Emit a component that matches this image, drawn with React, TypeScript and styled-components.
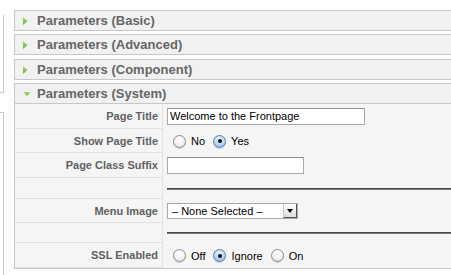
import React from 'react';
import styled, { createGlobalStyle } from 'styled-components';

const GlobalStyle = createGlobalStyle`
  html, body {
    margin: 0;
    padding: 0;
    background: #fff;
    overflow: hidden;
  }
  body {
    font-family: 'Liberation Sans', Arial, sans-serif;
  }
`;

const Page = styled.div`
  display: flex;
  align-items: stretch;
  padding-top: 10px;
  width: 100%;
  height: 275px;
  box-sizing: border-box;
  overflow: hidden;
`;

const SideColumn = styled.div`
  width: 4px;
  flex-shrink: 0;
  display: flex;
  flex-direction: column;
`;

const SideBox = styled.div<{ $top?: boolean }>`
  box-sizing: border-box;
  border-right: 1px solid #c9c9c9;
  ${p => p.$top
    ? `margin-top: 5px; height: 78px; border-bottom: 1px solid #c9c9c9;`
    : `margin-top: 19px; flex: 1; border-top: 1px solid #c9c9c9;`}
`;

const Main = styled.div`
  margin-left: 10px;
  flex: 1;
  min-width: 0;
`;

const Panel = styled.div<{ $gap: number }>`
  border: 1px solid #c8c8c8;
  border-right: none;
  margin-bottom: ${p => p.$gap}px;
  background: #f5f5f5;
`;

const PanelHeader = styled.div<{ $open?: boolean }>`
  height: 19px;
  display: flex;
  align-items: center;
  padding-left: 7px;
  background-color: #f4f4f4;
  background-image:
    linear-gradient(90deg, rgba(0, 0, 0, 0.012) 1px, transparent 1px),
    linear-gradient(rgba(0, 0, 0, 0.012) 1px, transparent 1px);
  background-size: 2px 2px;
  border-bottom: ${p => (p.$open ? '1px solid #c8c8c8' : 'none')};
  font-size: 13px;
  font-weight: bold;
  color: #666;
  cursor: pointer;
`;

const Arrow = styled.svg`
  width: 9px;
  height: 10px;
  margin-right: 6px;
  flex-shrink: 0;
`;

const Row = styled.div<{ $height: number }>`
  display: flex;
  height: ${p => p.$height}px;
`;

const Label = styled.div`
  width: 148px;
  box-sizing: border-box;
  flex-shrink: 0;
  border-right: 1px solid #e2e2e2;
  border-bottom: 1px solid #e2e2e2;
  display: flex;
  align-items: center;
  justify-content: flex-end;
  padding-right: 4px;
  font-size: 11px;
  font-weight: bold;
  color: #616161;
`;

const Value = styled.div`
  flex: 1;
  display: flex;
  align-items: center;
  padding-left: 4px;
  font-size: 11px;
  color: #000;
`;

const TextInput = styled.div<{ $width: number }>`
  width: ${p => p.$width}px;
  height: 17px;
  box-sizing: border-box;
  background: #fff;
  border: 1px solid #a9a9a9;
  border-top-color: #8f8f8f;
  padding-left: 2px;
  font-size: 11px;
  line-height: 15px;
  color: #000;
  white-space: nowrap;
`;

const Rule = styled.div`
  flex: 1;
  height: 0;
  border-top: 1px solid #4a4a4a;
  border-bottom: 1px solid #7a7a7a;
`;

const RadioGroup = styled.div`
  display: flex;
  align-items: center;
  gap: 2px;
`;

const RadioOption = styled.label`
  display: inline-flex;
  align-items: center;
`;

const Radio = styled.span<{ $checked?: boolean }>`
  width: 13px;
  height: 13px;
  box-sizing: border-box;
  margin-left: 6px;
  border-radius: 50%;
  border: 1px solid ${p => (p.$checked ? '#5b7fab' : '#8d8d8d')};
  background: ${p =>
    p.$checked
      ? 'radial-gradient(circle at 50% 30%, #eaf4fd 0%, #b7d5f2 55%, #7fb0e3 100%)'
      : 'radial-gradient(circle at 50% 30%, #ffffff 0%, #f2f2f2 55%, #d6d6d6 100%)'};
  box-shadow: 0 1px 1px rgba(0, 0, 0, 0.15);
  display: flex;
  align-items: center;
  justify-content: center;

  &::after {
    content: '';
    display: ${p => (p.$checked ? 'block' : 'none')};
    width: 4px;
    height: 4px;
    border-radius: 50%;
    background: #111;
  }
`;

const RadioText = styled.span`
  margin-left: 5px;
  font-size: 11px;
  color: #000;
`;

const Select = styled.div`
  width: 131px;
  height: 16px;
  box-sizing: border-box;
  display: flex;
  background: #fff;
  border: 1px solid #a9a9a9;
  font-size: 11px;
  line-height: 14px;
`;

const SelectText = styled.span`
  flex: 1;
  padding-left: 4px;
  white-space: nowrap;
`;

const SelectButton = styled.span`
  width: 14px;
  box-sizing: border-box;
  background: linear-gradient(#ffffff, #dcdcdc);
  border-left: 1px solid #c8c8c8;
  border-right: 1px solid #555;
  border-bottom: 1px solid #555;
  display: flex;
  align-items: center;
  justify-content: center;
`;

const Caret = styled.span`
  width: 0;
  height: 0;
  border-left: 3px solid transparent;
  border-right: 3px solid transparent;
  border-top: 4px solid #000;
`;

const ArrowIcon = ({ open }: { open?: boolean }) => (
  <Arrow viewBox="0 0 9 10">
    <defs>
      <linearGradient id={open ? 'ga' : 'gb'} x1="0" y1="0" x2="0" y2="1">
        <stop offset="0" stopColor="#a6e070" />
        <stop offset="1" stopColor="#62b030" />
      </linearGradient>
    </defs>
    {open ? (
      <polygon points="1.5,3 8.5,3 5,7" fill="url(#ga)" />
    ) : (
      <polygon points="1,1 5.5,5 1,9" fill="url(#gb)" />
    )}
  </Arrow>
);

const collapsed = [
  { title: 'Parameters (Basic)', gap: 3 },
  { title: 'Parameters (Advanced)', gap: 4 },
  { title: 'Parameters (Component)', gap: 3 },
];

export default function App() {
  return (
    <>
      <GlobalStyle />
      <Page>
        <SideColumn>
          <SideBox $top />
          <SideBox />
        </SideColumn>
        <Main>
          {collapsed.map(({ title, gap }) => (
            <Panel key={title} $gap={gap}>
              <PanelHeader>
                <ArrowIcon />
                {title}
              </PanelHeader>
            </Panel>
          ))}
          <Panel $gap={0}>
            <PanelHeader $open>
              <ArrowIcon open />
              Parameters (System)
            </PanelHeader>
            <Row $height={25}>
              <Label>Page Title</Label>
              <Value>
                <TextInput $width={198}>Welcome to the Frontpage</TextInput>
              </Value>
            </Row>
            <Row $height={24}>
              <Label>Show Page Title</Label>
              <Value>
                <RadioGroup>
                  <RadioOption>
                    <Radio />
                    <RadioText>No</RadioText>
                  </RadioOption>
                  <RadioOption>
                    <Radio $checked />
                    <RadioText>Yes</RadioText>
                  </RadioOption>
                </RadioGroup>
              </Value>
            </Row>
            <Row $height={25}>
              <Label>Page Class Suffix</Label>
              <Value>
                <TextInput $width={137} />
              </Value>
            </Row>
            <Row $height={21}>
              <Label />
              <Value>
                <Rule />
              </Value>
            </Row>
            <Row $height={24}>
              <Label>Menu Image</Label>
              <Value>
                <Select>
                  <SelectText>– None Selected –</SelectText>
                  <SelectButton>
                    <Caret />
                  </SelectButton>
                </Select>
              </Value>
            </Row>
            <Row $height={20}>
              <Label />
              <Value>
                <Rule />
              </Value>
            </Row>
            <Row $height={25}>
              <Label>SSL Enabled</Label>
              <Value>
                <RadioGroup>
                  <RadioOption>
                    <Radio />
                    <RadioText>Off</RadioText>
                  </RadioOption>
                  <RadioOption>
                    <Radio $checked />
                    <RadioText>Ignore</RadioText>
                  </RadioOption>
                  <RadioOption>
                    <Radio />
                    <RadioText>On</RadioText>
                  </RadioOption>
                </RadioGroup>
              </Value>
            </Row>
          </Panel>
        </Main>
      </Page>
    </>
  );
}
